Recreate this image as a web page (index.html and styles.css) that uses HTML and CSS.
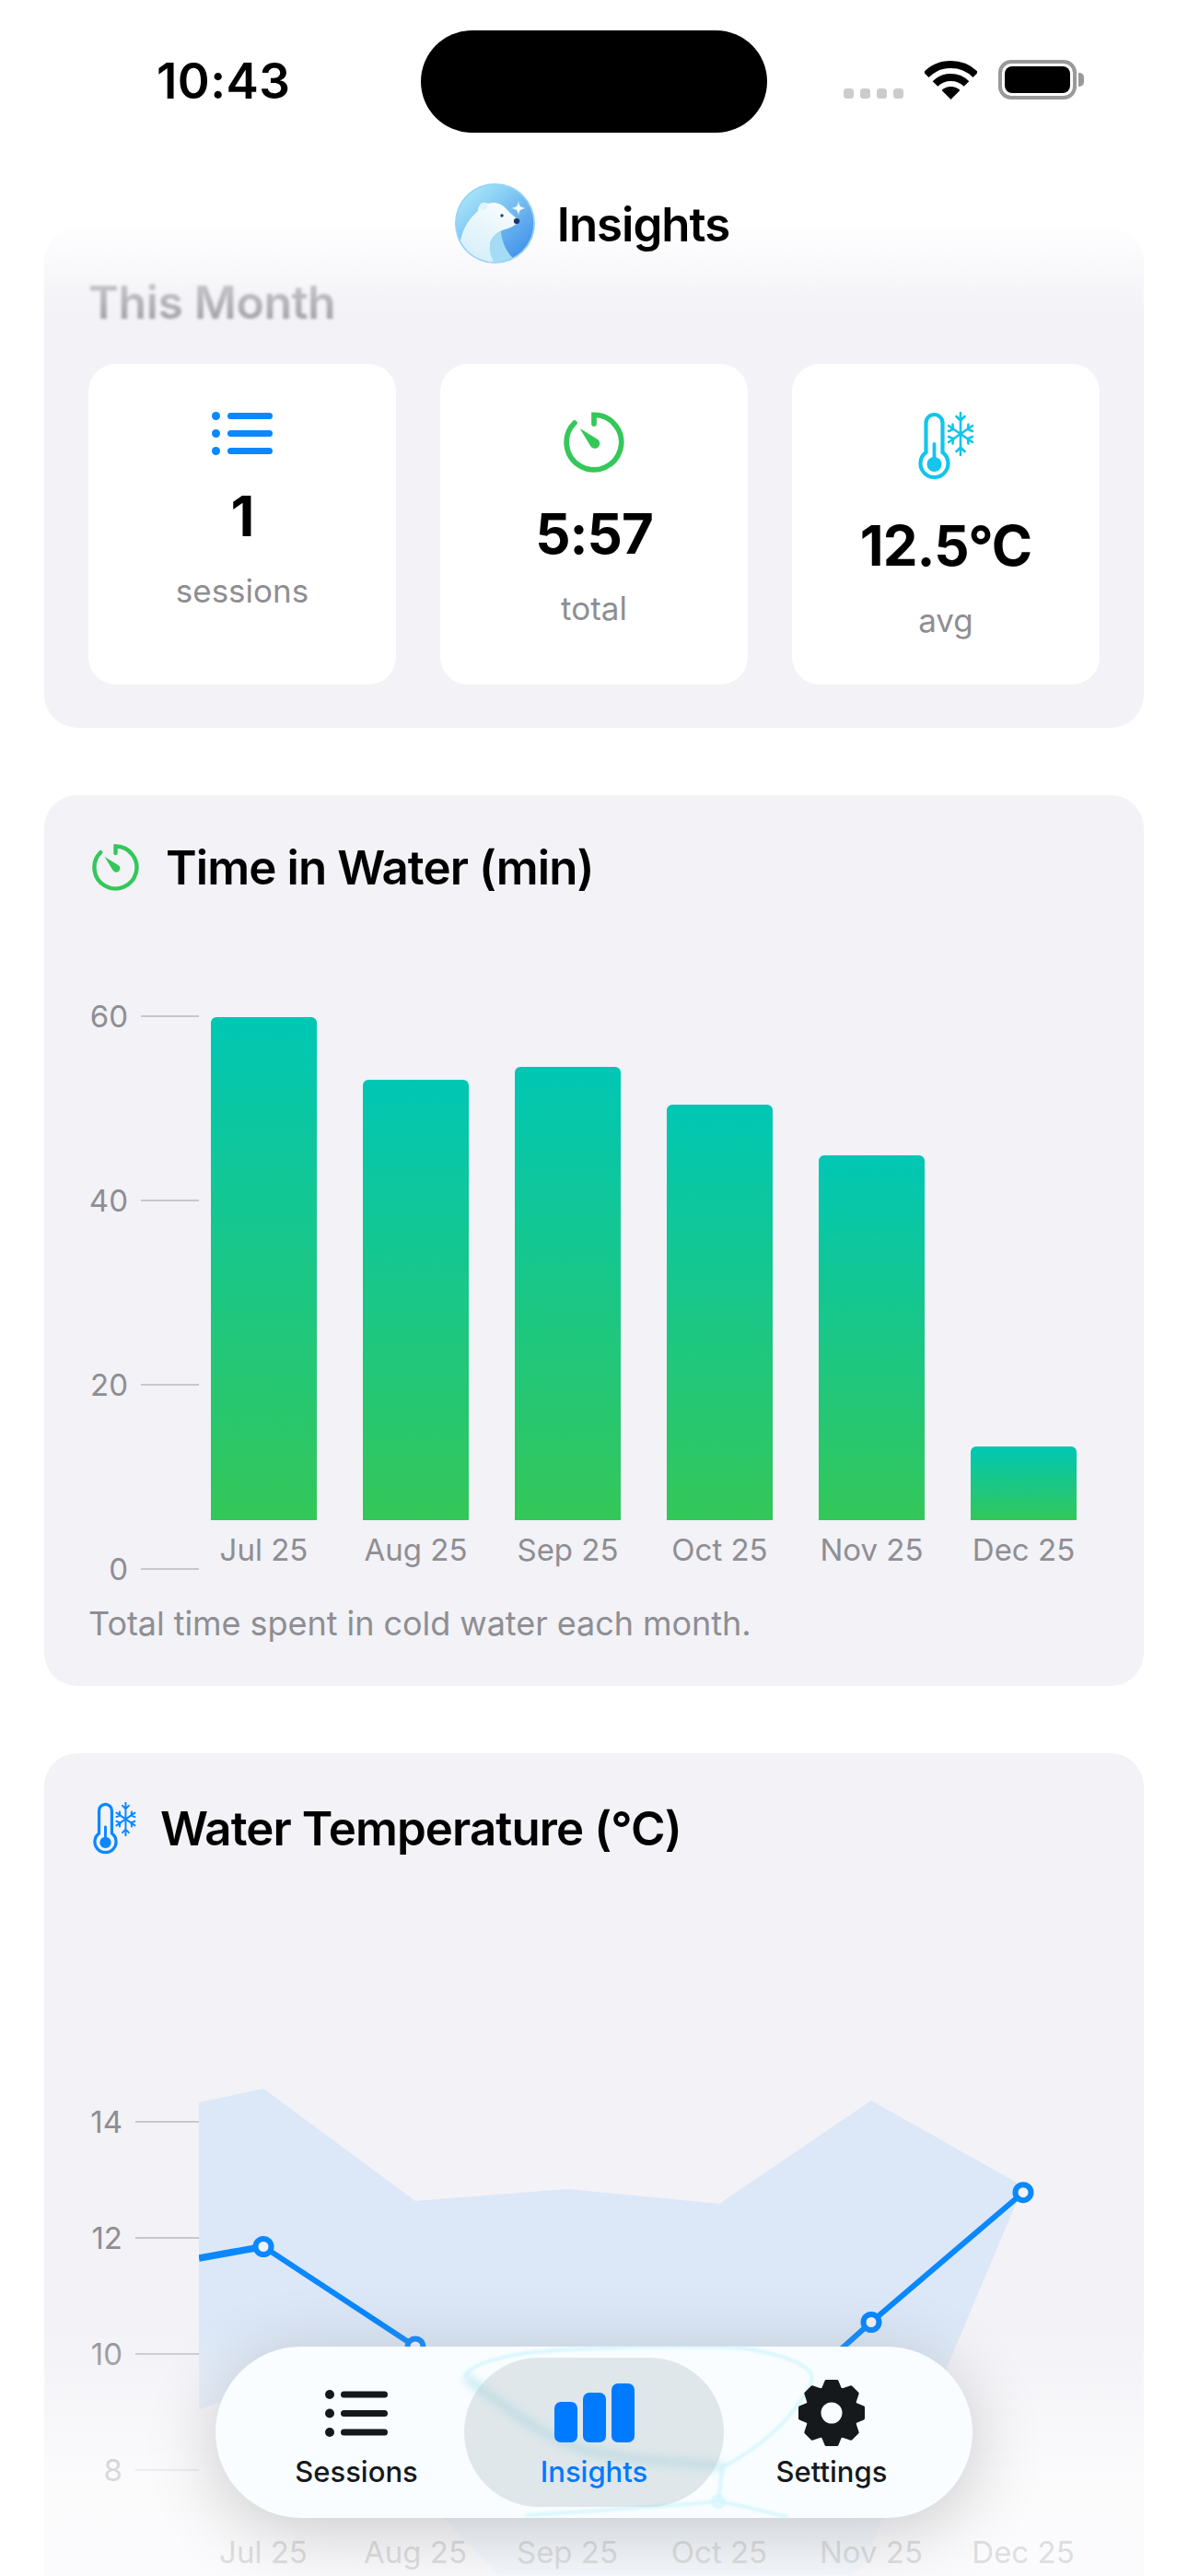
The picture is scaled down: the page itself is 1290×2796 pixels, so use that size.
FILE: index.html
```html
<!DOCTYPE html>
<html lang="en">
<head>
    <meta charset="UTF-8">
    <meta name="viewport" content="width=device-width, initial-scale=1.0">
    <title>Insights</title>
    <link rel="stylesheet" href="styles.css">
</head>
<body>
    <svg class="icon-defs" width="0" height="0" aria-hidden="true">
        <defs>
            <symbol id="icon-timer" viewBox="0 0 51 51">
                <path d="M25.5 10V2.5A23 23 0 1 1 9.2 9.2" fill="none" stroke="currentColor" stroke-width="4.4" stroke-linecap="round"/>
                <path d="M13.6 14L28.4 23A4.2 4.2 0 1 1 22.6 28.8Z" fill="currentColor"/>
            </symbol>
            <symbol id="icon-thermo" viewBox="0 0 61 74">
                <path d="M8.500 44V12a9 9 0 0 1 18 0V44A15 15 0 1 1 8.500 44Z" fill="none" stroke="currentColor" stroke-width="4.2"/>
                <circle cx="17.500" cy="57" r="8" fill="currentColor"/>
                <rect x="15.600" y="33" width="3.800" height="24" rx="1.900" fill="currentColor"/>
                <g fill="none" stroke="currentColor" stroke-width="2.600" stroke-linecap="round">
                    <path d="M46 1V47M41.500 5L46 9.500L50.500 5M41.500 43L46 38.500L50.500 43"/>
                    <path d="M33 15L59 33M33 21L38 19L37.500 13.500M59 27L54 29L54.500 34.500"/>
                    <path d="M59 15L33 33M59 21L54 19L54.500 13.500M33 27L38 29L37.500 34.500"/>
                </g>
            </symbol>
        </defs>
    </svg>

    <div class="screen">
        <main class="content">
            <section class="card month-card">
                <h2 class="month-title">This Month</h2>
                <div class="stats">
                    <div class="stat">
                        <svg class="stat-icon list-icon" viewBox="0 0 66 47">
                            <circle cx="4.500" cy="4.500" r="4.500"/><rect x="17" y="1" width="49" height="7" rx="3.500"/>
                            <circle cx="4.500" cy="23.500" r="4.500"/><rect x="17" y="20" width="49" height="7" rx="3.500"/>
                            <circle cx="4.500" cy="42.500" r="4.500"/><rect x="17" y="39" width="49" height="7" rx="3.500"/>
                        </svg>
                        <div class="stat-value">1</div>
                        <div class="stat-label">sessions</div>
                    </div>
                    <div class="stat">
                        <svg class="stat-icon timer-icon"><use href="#icon-timer"/></svg>
                        <div class="stat-value">5:57</div>
                        <div class="stat-label">total</div>
                    </div>
                    <div class="stat">
                        <svg class="stat-icon thermo-icon"><use href="#icon-thermo"/></svg>
                        <div class="stat-value">12.5°C</div>
                        <div class="stat-label">avg</div>
                    </div>
                </div>
            </section>

            <section class="card time-card">
                <div class="card-head">
                    <svg class="head-timer"><use href="#icon-timer"/></svg>
                    <h2>Time in Water (min)</h2>
                </div>
                <div class="chart">
                    <div class="y-axis">
                        <div class="tick"><span>60</span><i></i></div>
                        <div class="tick"><span>40</span><i></i></div>
                        <div class="tick"><span>20</span><i></i></div>
                        <div class="tick"><span>0</span><i></i></div>
                    </div>
                    <div class="bars">
                        <div class="bar-col"><div class="bar-slot"><div class="bar" style="height: 546px"></div></div><span>Jul 25</span></div>
                        <div class="bar-col"><div class="bar-slot"><div class="bar" style="height: 478px"></div></div><span>Aug 25</span></div>
                        <div class="bar-col"><div class="bar-slot"><div class="bar" style="height: 492px"></div></div><span>Sep 25</span></div>
                        <div class="bar-col"><div class="bar-slot"><div class="bar" style="height: 451px"></div></div><span>Oct 25</span></div>
                        <div class="bar-col"><div class="bar-slot"><div class="bar" style="height: 396px"></div></div><span>Nov 25</span></div>
                        <div class="bar-col"><div class="bar-slot"><div class="bar" style="height: 80px"></div></div><span>Dec 25</span></div>
                    </div>
                </div>
                <p class="caption">Total time spent in cold water each month.</p>
            </section>

            <section class="card temp-card">
                <div class="card-head temp-head">
                    <svg class="head-thermo"><use href="#icon-thermo"/></svg>
                    <h2>Water Temperature (°C)</h2>
                </div>
                <div class="chart line-chart">
                    <div class="y-axis temp-axis">
                        <div class="tick"><span>14</span><i></i></div>
                        <div class="tick"><span>12</span><i></i></div>
                        <div class="tick"><span>10</span><i></i></div>
                        <div class="tick"><span>8</span><i></i></div>
                    </div>
                    <svg class="plot" viewBox="0 0 978 544" width="978" height="544">
                        <polygon class="range" points="0,31 70,16 235,138 400,125 565,141 730,29 895,122 812,319 736,497 724,534 565,620 400,620 235,451 70,338 0,365"/>
                        <polyline class="temp-line" points="70,187.500 235,296 400,440 565,417 730,269.500 895,128.700"/>
                        <line class="temp-line first-seg" x1="0" y1="200" x2="70" y2="187.500"/>
                        <circle class="dot" cx="70" cy="187.500" r="8.500"/>
                        <circle class="dot" cx="235" cy="296" r="8.500"/>
                        <circle class="dot" cx="400" cy="440" r="8.500"/>
                        <circle class="dot" cx="565" cy="417" r="8.500"/>
                        <circle class="dot" cx="730" cy="269.500" r="8.500"/>
                        <circle class="dot" cx="895" cy="128.700" r="8.500"/>
                        <g class="month-labels">
                            <text x="70" y="531">Jul 25</text>
                            <text x="235" y="531">Aug 25</text>
                            <text x="400" y="531">Sep 25</text>
                            <text x="565" y="531">Oct 25</text>
                            <text x="730" y="531">Nov 25</text>
                            <text x="895" y="531">Dec 25</text>
                        </g>
                    </svg>
                </div>
            </section>
        </main>

        <div class="bottom-fade"></div>

        <header class="top">
            <div class="status-bar">
                <div class="time">10:43</div>
                <div class="island"></div>
                <div class="status-icons">
                    <div class="signal"><b></b><b></b><b></b><b></b></div>
                    <svg class="wifi" viewBox="0 0 57 42" width="57" height="42">
                        <path d="M1.630 15.130A38 38 0 0 1 55.370 15.130" fill="none" stroke="#000" stroke-width="8"/>
                        <path d="M11.530 25.030A24 24 0 0 1 45.470 25.030" fill="none" stroke="#000" stroke-width="8"/>
                        <path d="M28.500 42L18.600 32.100A14 14 0 0 1 38.400 32.100Z"/>
                    </svg>
                    <div class="battery"><div class="battery-level"></div></div>
                </div>
            </div>
            <div class="nav-title">
                <svg class="logo" viewBox="0 0 87 87" width="87" height="87">
                    <defs>
                        <linearGradient id="logoBg" x1="0.150" y1="0.100" x2="0.850" y2="0.900">
                            <stop offset="0" stop-color="#a6e6f8"/>
                            <stop offset="1" stop-color="#4493ea"/>
                        </linearGradient>
                        <linearGradient id="bearBody" x1="0.700" y1="0" x2="0.200" y2="1">
                            <stop offset="0" stop-color="#f7fcfe"/>
                            <stop offset="1" stop-color="#d4eef9"/>
                        </linearGradient>
                        <clipPath id="logoClip"><circle cx="43.500" cy="43.500" r="42"/></clipPath>
                    </defs>
                    <circle cx="43.500" cy="43.500" r="43.500" fill="#97d3f8"/>
                    <g clip-path="url(#logoClip)">
                        <circle cx="43.500" cy="43.500" r="42" fill="url(#logoBg)"/>
                        <path d="M6 62C9 47 17 37 25 30C25 23 31 19 36 22C42 20 50 21 56 28C60 33 66 36 68 40C69 44 62 48 54 50C45 53 38 60 38 68C38 74 41 80 47 87L6 87Z" fill="url(#bearBody)"/>
                        <path d="M38 68C38 60 45 53 50 51.500C50 60 55 74 63 81C57 85 50 87 43 87C39 80 37 74 38 68Z" fill="#a5dcf5"/>
                        <circle cx="31" cy="25" r="4" fill="#dff3fb"/>
                        <circle cx="51" cy="35" r="1.700" fill="#1f3f76"/>
                        <ellipse cx="67" cy="41" rx="3.200" ry="3" fill="#1c3566"/>
                        <path d="M69 19C69.800 24.500 71 26 76.500 27C71 28 69.800 29.500 69 35C68.200 29.500 67 28 61.500 27C67 26 68.200 24.500 69 19Z" fill="#f0faff"/>
                    </g>
                </svg>
                <h1>Insights</h1>
            </div>
        </header>

        <nav class="tab-bar">
            <svg class="glass-rim" viewBox="0 0 822 186" width="822" height="186">
                <path d="M271 33C276 16 330 6 370 4C430 0 500 0 562 1C600 4 640 16 647 30C650 42 640 52 630 66C610 95 570 122 551 130C548 145 548 158 546 168"/>
                <path d="M337 183C400 179 480 174 546 168C570 172 600 180 622 185"/>
                <circle cx="546" cy="168" r="6"/>
                <path class="rim-soft" d="M271 33C320 70 360 100 400 112C460 125 510 125 551 130"/>
            </svg>
            <a class="tab">
                <svg class="tab-icon sessions-icon" viewBox="0 0 68 50" width="68" height="50">
                    <circle cx="5" cy="5" r="5"/><rect x="17" y="1.500" width="51" height="7" rx="3.500"/>
                    <circle cx="5" cy="25.500" r="5"/><rect x="17" y="22" width="51" height="7" rx="3.500"/>
                    <circle cx="5" cy="46" r="5"/><rect x="17" y="42.500" width="51" height="7" rx="3.500"/>
                </svg>
                <span>Sessions</span>
            </a>
            <a class="tab tab-active">
                <svg class="tab-icon" viewBox="0 0 87 64" width="87" height="64">
                    <rect x="0" y="20" width="25" height="44" rx="7"/>
                    <rect x="31" y="10" width="25" height="54" rx="7"/>
                    <rect x="62" y="0" width="25" height="64" rx="7"/>
                </svg>
                <span>Insights</span>
            </a>
            <a class="tab">
                <svg class="tab-icon" viewBox="0 0 72 72" width="72" height="72">
                    <path fill-rule="evenodd" stroke-width="3" stroke-linejoin="round" d="M26.500 10L30 1.500H42L45.500 10L47.670 10.900L57.210 7.800L64.200 14.790L61.100 24.330L62 26.500L70.500 30V42L62 45.500L61.100 47.670L64.200 57.210L57.210 64.200L47.670 61.100L45.500 62L42 70.500H30L26.500 62L24.330 61.100L14.790 64.200L7.800 57.210L10.900 47.670L10 45.500L1.500 42V30L10 26.500L10.900 24.330L7.800 14.790L14.790 7.800L24.330 10.900ZM36 23A13 13 0 1 0 36 49A13 13 0 1 0 36 23Z"/>
                </svg>
                <span>Settings</span>
            </a>
        </nav>
    </div>
</body>
</html>
```

FILE: styles.css
```css
* {
    box-sizing: border-box;
}

body {
    margin: 0;
    background: #fff;
    font-family: Inter, 'Noto Sans', sans-serif;
    color: #000;
}

h1, h2, p {
    margin: 0;
}

.icon-defs {
    position: absolute;
}

.screen {
    position: relative;
    width: 1290px;
    height: 2796px;
    overflow: hidden;
    background: #fff;
}

.content {
    display: flex;
    flex-direction: column;
    gap: 73px;
    padding: 247px 48px 0;
}

.card {
    background: #f2f2f7;
    border-radius: 36px;
    padding: 48px;
}

/* this month */
.month-card {
    height: 543px;
}

.month-title {
    font-size: 50px;
    font-weight: 600;
    line-height: 66px;
    letter-spacing: -0.4px;
    color: #a6a6aa;
    filter: blur(1.4px);
    margin-bottom: 34px;
}

.stats {
    display: flex;
    gap: 48px;
}

.stat {
    width: 334px;
    height: 348px;
    background: #fff;
    border-radius: 30px;
    padding-top: 52px;
    display: flex;
    flex-direction: column;
    align-items: center;
}

.stat-icon {
    margin-bottom: 30px;
}

.list-icon {
    width: 66px;
    height: 47px;
    fill: #0a88ff;
}

.timer-icon {
    width: 66px;
    height: 66px;
    color: #34c759;
}

.thermo-icon {
    width: 61px;
    height: 74px;
    color: #14c4ec;
    margin-bottom: 35px;
}

.stat-value {
    font-size: 60px;
    font-weight: 700;
    line-height: 72px;
    letter-spacing: -1px;
}

.stat-label {
    font-size: 35px;
    line-height: 48px;
    margin-top: 21px;
    color: #8e8e93;
}

/* chart cards */
.card-head {
    display: flex;
    align-items: center;
    gap: 29px;
    height: 60px;
}

.card-head h2 {
    font-size: 51px;
    font-weight: 600;
    letter-spacing: -0.9px;
}

.head-timer {
    width: 51px;
    height: 51px;
    margin-left: 4px;
    color: #34c759;
}

.chart {
    display: flex;
    margin-top: 112px;
}

.y-axis {
    width: 120px;
    flex-shrink: 0;
    display: flex;
    flex-direction: column;
    justify-content: space-between;
    height: 640px;
}

.tick {
    height: 40px;
    display: flex;
    align-items: center;
    justify-content: flex-end;
    gap: 14px;
    font-size: 33px;
    color: #8e8e93;
}

.tick i {
    width: 63px;
    height: 2px;
    background: #c7c7cc;
}

.bars {
    display: flex;
    gap: 50px;
    margin-left: 13px;
}

.bar-col {
    width: 115px;
    display: flex;
    flex-direction: column;
    align-items: center;
    font-size: 33px;
    color: #8e8e93;
    line-height: 64px;
    white-space: nowrap;
}

.bar-slot {
    width: 100%;
    height: 567px;
    display: flex;
    align-items: flex-end;
}

.bar {
    width: 100%;
    border-radius: 6px 6px 0 0;
    background: linear-gradient(180deg, #00c7b4, #34c759);
}

.caption {
    margin: 16px 0 -3px;
    font-size: 36px;
    line-height: 46px;
    letter-spacing: -0.05px;
    color: #8e8e93;
}

.temp-card {
    height: 1000px;
}

.temp-head {
    height: 66px;
    gap: 26px;
}

.head-thermo {
    width: 47px;
    height: 57px;
    margin-left: 5px;
    color: #0a88ff;
}

.line-chart {
    margin-top: 234px;
}

.temp-axis {
    height: 418px;
    margin-top: 32px;
}

.temp-axis .tick i {
    width: 69px;
}

.plot {
    flex-shrink: 0;
}

.range {
    fill: #0a88ff;
    fill-opacity: 0.095;
}

.temp-line {
    fill: none;
    stroke: #0a88ff;
    stroke-width: 6;
    stroke-linejoin: round;
}

.first-seg {
    stroke-width: 7.5;
}

.dot {
    fill: #f2f2f7;
    stroke: #0a88ff;
    stroke-width: 6;
}

.month-labels text {
    font-size: 33px;
    fill: #8e8e93;
    text-anchor: middle;
}

/* top and bottom overlays */
.bottom-fade {
    position: absolute;
    left: 0;
    right: 0;
    bottom: 0;
    height: 276px;
    background: linear-gradient(180deg, rgba(255, 255, 255, 0) 0, rgba(255, 255, 255, 0.66) 58%, rgba(255, 255, 255, 0.72) 100%);
}

.top {
    position: absolute;
    top: 0;
    left: 0;
    right: 0;
    height: 345px;
    background: linear-gradient(180deg, #fff 0, #fff 240px, rgba(255, 255, 255, 0) 345px);
}

.status-bar {
    display: flex;
    height: 199px;
}

.time {
    width: 457px;
    padding: 58px 0 0 170px;
    font-size: 53px;
    font-weight: 600;
    line-height: 60px;
    letter-spacing: 0.4px;
}

.island {
    width: 376px;
    height: 111px;
    margin-top: 33px;
    border-radius: 56px;
    background: #000;
}

.status-icons {
    display: flex;
    align-items: flex-end;
    gap: 23px;
    height: 43px;
    margin-top: 65px;
    margin-left: 83px;
}

.signal {
    display: flex;
    gap: 7px;
    padding-bottom: 1px;
}

.signal b {
    width: 11px;
    height: 11px;
    border-radius: 3.5px;
    background: #ccc;
}

.battery {
    position: relative;
    width: 85px;
    height: 43px;
    padding: 3px;
    border: 4px solid #999;
    border-radius: 14px;
}

.battery::after {
    content: '';
    position: absolute;
    right: -12px;
    top: 10px;
    width: 6px;
    height: 15px;
    border-radius: 0 5px 5px 0;
    background: #999;
}

.battery-level {
    width: 100%;
    height: 100%;
    border-radius: 8px;
    background: #000;
}

.nav-title {
    display: flex;
    align-items: center;
    justify-content: center;
    gap: 24px;
    padding-right: 4px;
}

.nav-title h1 {
    font-size: 51px;
    font-weight: 600;
    letter-spacing: -1px;
    padding-top: 2px;
}

/* tab bar */
.tab-bar {
    position: absolute;
    left: 234px;
    top: 2547px;
    width: 822px;
    height: 186px;
    display: flex;
    justify-content: center;
    padding: 12px 0;
    border-radius: 93px;
    background: #f9fdff;
    box-shadow: 0 14px 80px rgba(0, 0, 0, 0.2);
}

.glass-rim {
    position: absolute;
    left: 0;
    top: 0;
    fill: none;
    stroke: #c8f3fc;
    stroke-width: 3;
    filter: blur(1.5px);
    opacity: 0.85;
}

.rim-soft {
    stroke-width: 10;
    stroke: #bfeaf3;
    filter: blur(4px);
}

.tab {
    position: relative;
    width: 258px;
    display: flex;
    flex-direction: column;
    align-items: center;
    font-size: 31px;
    font-weight: 500;
    color: #15191c;
    fill: #15191c;
    stroke: #15191c;
    stroke-width: 0;
}

.tab-active {
    color: #007aff;
    fill: #007aff;
}

.tab-active::before {
    content: '';
    position: absolute;
    left: -12px;
    right: -12px;
    top: 0;
    bottom: 0;
    border-radius: 81px;
    background: rgba(190, 203, 208, 0.45);
}

.tab-icon {
    position: relative;
    height: 72px;
    margin-top: 24px;
}

.tab span {
    position: relative;
    margin-top: 8px;
    line-height: 40px;
}
```
